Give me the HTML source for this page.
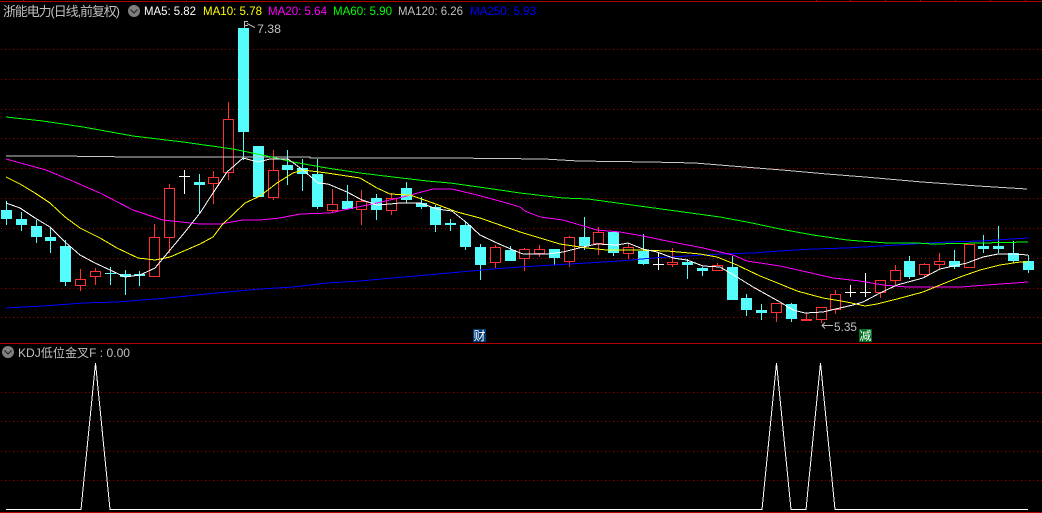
<!DOCTYPE html>
<html><head><meta charset="utf-8"><title>KDJ</title>
<style>html,body{margin:0;padding:0;background:#000;width:1042px;height:513px;overflow:hidden}svg{display:block}
text{font-family:"Liberation Sans","WenQuanYi Zen Hei","Noto Sans CJK SC",sans-serif;font-size:12px}</style></head>
<body>
<svg width="1042" height="513" viewBox="0 0 1042 513" xmlns="http://www.w3.org/2000/svg">
<rect width="1042" height="513" fill="#000"/>
<g shape-rendering="crispEdges">
<path d="M1 49.5H1042M1 79.5H1042M1 109.5H1042M1 138.5H1042M1 168.5H1042M1 198.5H1042M1 228.5H1042M1 258.5H1042M1 288.5H1042M1 317.5H1042M1 392.5H1042M1 421.5H1042M1 451.5H1042M1 480.5H1042" stroke="#a00000" stroke-width="1" stroke-dasharray="1 3" fill="none"/>
<path d="M0 1.5H1042M0 343.5H1042M0 512.5H1042" stroke="#b00000" fill="none"/>
<path d="M23.5 0V1M816.5 0V1M850.5 0V1M885.5 0V1M920.5 0V1M955.5 0V1M990.5 0V1M1025.5 0V1" stroke="#b00000" fill="none"/>

<!-- white dojis -->
<path d="M184.5 170V194M179 176.5H190M658.5 252V270M653 264.5H664M850.5 285V297M845 292.5H856M865.5 273V297M860 292.5H871" stroke="#fff" fill="none"/>

<!-- red wicks -->
<path d="M80.5 269V291M95.5 268V285M154.5 224V277M169.5 184V253M213.5 171V204M228.5 102V180M273.5 150V200M332.5 189V213M361.5 190V225M391.5 193V215M495.5 245V268M524.5 248V271M539.5 245V257M569.5 236V267M598.5 227V255M628.5 243V259M672.5 248V267M717.5 263V271M776.5 303V322M806.5 313V320M821.5 307V323M835.5 290V314M880.5 280V298M895.5 265V285M924.5 263V277M939.5 253V270M969.5 244V268" stroke="#ff3232" fill="none"/>
<!-- red bodies -->
<g fill="#000" stroke="#ff3232">
<rect x="75.5" y="279.5" width="10" height="6"/><rect x="90.5" y="271.5" width="10" height="5"/><rect x="149.5" y="237.5" width="10" height="39"/><rect x="164.5" y="188.5" width="10" height="49"/><rect x="208.5" y="177.5" width="10" height="6"/><rect x="223.5" y="119.5" width="10" height="53"/><rect x="268.5" y="170.5" width="10" height="27"/><rect x="327.5" y="204.5" width="10" height="6"/><rect x="356.5" y="201.5" width="10" height="8"/><rect x="386.5" y="198.5" width="10" height="12"/><rect x="490.5" y="247.5" width="10" height="15"/><rect x="519.5" y="249.5" width="10" height="9"/><rect x="534.5" y="249.5" width="10" height="4"/><rect x="564.5" y="237.5" width="10" height="24"/><rect x="593.5" y="232.5" width="10" height="11"/><rect x="623.5" y="247.5" width="10" height="6"/><rect x="667.5" y="262.5" width="10" height="2"/><rect x="712.5" y="265.5" width="10" height="5"/><rect x="771.5" y="303.5" width="10" height="9"/><rect x="816.5" y="307.5" width="10" height="12"/><rect x="830.5" y="294.5" width="10" height="15"/><rect x="875.5" y="280.5" width="10" height="12"/><rect x="890.5" y="270.5" width="10" height="10"/><rect x="919.5" y="264.5" width="10" height="10"/><rect x="934.5" y="261.5" width="10" height="3"/><rect x="964.5" y="244.5" width="10" height="23"/>
</g>
<rect x="801" y="319" width="11" height="2" fill="#ff3232"/>

<!-- cyan wicks -->
<path d="M6.5 201V225M21.5 212V231M36.5 220V243M50.5 227V253M65.5 240V286M110.5 267V285M125.5 270V295M139.5 271V286M199.5 174V213M243.5 28V160M258.5 146V197M287.5 150V185M302.5 159V191M317.5 159V209M347.5 185V209M376.5 194V220M406.5 182V203M421.5 197V209M435.5 205V232M450.5 219V231M465.5 221V250M480.5 244V280M510.5 246V261M554.5 249V265M584.5 217V250M613.5 232V256M643.5 234V265M687.5 259V279M702.5 267V276M732.5 256V300M746.5 294V316M761.5 304V320M791.5 303V322M909.5 256V279M954.5 250V269M983.5 235V253M998.5 226V253M1013.5 241V263M1028.5 255V273" stroke="#54fcfc" fill="none"/>
<!-- cyan bodies -->
<path fill="#54fcfc" d="M1 210h11v9H1zM16 219h11v6H16zM31 226h11v11H31zM45 237h11v4H45zM60 246h11v36H60zM105 273h11v1H105zM120 274h11v3H120zM134 274h11v2H134zM194 182h11v3H194zM238 28h11v104H238zM253 146h11v51H253zM282 165h11v5H282zM297 168h11v6H297zM312 174h11v33H312zM342 201h11v8H342zM371 198h11v12H371zM401 188h11v12H401zM416 203h11v4H416zM430 207h11v18H430zM445 223h11v2H445zM460 225h11v22H460zM475 247h11v18H475zM505 250h11v11H505zM549 249h11v9H549zM579 237h11v9H579zM608 232h11v21H608zM638 251h11v13H638zM682 262h11v3H682zM697 268h11v3H697zM727 267h11v33H727zM741 298h11v12H741zM756 310h11v3H756zM786 304h11v15H786zM904 261h11v16H904zM949 261h11v6H949zM978 246h11v3H978zM993 246h11v3H993zM1008 253h11v8H1008zM1023 261h11v9H1023z"/>

<g fill="none" stroke-width="1">
<!-- MA250 -->
<polyline stroke="#0000ff" points="6,308 43,306 83,303 117,302 167,298 217,293 260,289 293,287 327,283 360,281 393,278 427,275 460,272 493,269 520,267 553,265 587,263 620,261 653,258 687,256 720,254 753,253 780,251 813,249 847,248 880,246 913,244 947,242 980,241 1028,238"/>
<!-- MA120 -->
<polyline stroke="#c8c8c8" points="6,156 58,156 133,157 267,157 310,157 310,158 450,158 544,159 578,161 650,162 695,163 744,167 782,170 827,174 865,177 922,182 978,186 1027,189"/>
<!-- MA60 -->
<polyline stroke="#00ff00" points="6,117 43,121 83,127 133,136 183,142 233,149 267,156 293,162 327,168 360,173 393,177 427,181 450,183 493,189 520,193 563,198 588,199 676,211 720,217 752,223 780,229 813,235 847,240 887,243 917,243 933,244 1028,242"/>
<!-- MA20 -->
<polyline stroke="#ff00ff" points="6,159 46,170 70,180 100,193 133,210 163,220 200,224 220,224 243,220 260,220 280,218 300,214 330,213 353,208 377,203 403,197 433,189 452,189 477,195 503,202 520,207 525,211 540,217 563,220 597,230 620,232 643,236 677,243 703,248 733,255 747,261 780,266 807,272 833,278 860,281 883,285 907,287 930,287 960,287 987,285 1028,282"/>
<!-- MA10 -->
<polyline stroke="#ffff00" points="6,177 20,184 35,193 50,203 65,217 80,228 100,238 117,248 138,258 155,260 170,257 200,244 213,237 222,225 245,203 260,196 277,183 293,173 303,170 327,173 360,178 377,188 390,194 410,195 433,203 457,212 480,218 500,225 520,232 540,238 560,244 587,248 607,250 637,250 667,251 700,254 717,257 737,265 760,276 780,284 797,291 823,298 847,302 865,306 877,304 897,299 923,292 940,285 960,277 980,270 1000,265 1020,262 1028,262"/>
<!-- MA5 -->
<polyline stroke="#ffffff" points="6,203 20,208 35,218 50,227 65,242 80,255 95,263 110,270 125,277 140,275 155,268 170,250 185,232 200,213 213,193 227,172 243,158 258,162 270,159 288,159 303,170 318,183 328,184 347,192 362,200 377,205 390,204 400,203 420,203 437,209 452,211 467,223 480,235 497,243 513,250 523,254 547,254 563,252 583,247 597,244 617,245 628,243 643,249 657,252 673,258 687,260 703,266 720,267 737,277 753,287 780,302 793,310 805,313 823,312 840,308 853,305 863,302 880,293 897,285 923,278 940,269 967,263 983,257 998,254 1013,254 1028,255"/>
<!-- KDJ -->
<polyline stroke="#ffffff" points="6,509.5 81,509.5 95.5,363 110,509.5 762,509.5 776.5,363 791,509.5 806,509.5 820.5,363 835,509.5 1028,509.5"/>
</g>
<rect x="473" y="329" width="13" height="13" fill="#003c78"/>
<rect x="859" y="329" width="13" height="13" fill="#006e1e"/>
</g>

<!-- arrows -->
<path d="M244.5 21V28M244.5 21.5H248M244.5 25.5H248M247 23.5L255 27.5" stroke="#c0c0c0" fill="none"/>
<path d="M833 325.5H822M825 322.5L822 325.5L825 328.5" stroke="#c0c0c0" fill="none"/>
<text x="257" y="33" fill="#c0c0c0" textLength="24" lengthAdjust="spacingAndGlyphs">7.38</text>
<text x="834" y="331" fill="#c0c0c0" textLength="23" lengthAdjust="spacingAndGlyphs">5.35</text>

<text x="473.5" y="340" fill="#fff" style="font-size:12px">财</text>
<text x="859.5" y="340" fill="#fff" style="font-size:12px">减</text>

<!-- header -->
<text x="3" y="16" fill="#c0c0c0" textLength="117" lengthAdjust="spacing" style="font-size:13px">浙能电力(日线,前复权)</text>
<circle cx="134" cy="11" r="6" fill="#808080"/>
<path d="M130.5 9.5L134 13L137.5 9.5" stroke="#333" stroke-width="1.3" fill="none"/>
<text x="144" y="15" fill="#ffffff" textLength="52" lengthAdjust="spacingAndGlyphs">MA5: 5.82</text>
<text x="203" y="15" fill="#ffff00" textLength="59" lengthAdjust="spacingAndGlyphs">MA10: 5.78</text>
<text x="268" y="15" fill="#ff00ff" textLength="59" lengthAdjust="spacingAndGlyphs">MA20: 5.64</text>
<text x="333" y="15" fill="#00ff00" textLength="59" lengthAdjust="spacingAndGlyphs">MA60: 5.90</text>
<text x="398" y="15" fill="#c0c0c0" textLength="65" lengthAdjust="spacingAndGlyphs">MA120: 6.26</text>
<text x="470" y="15" fill="#0000ff" textLength="66" lengthAdjust="spacingAndGlyphs">MA250: 5.93</text>

<!-- lower header -->
<circle cx="8" cy="352" r="6" fill="#808080"/>
<path d="M4.5 350.5L8 354L11.5 350.5" stroke="#333" stroke-width="1.3" fill="none"/>
<text x="18" y="357" fill="#c0c0c0" textLength="112" lengthAdjust="spacingAndGlyphs">KDJ低位金叉F : 0.00</text>
</svg>
</body></html>
